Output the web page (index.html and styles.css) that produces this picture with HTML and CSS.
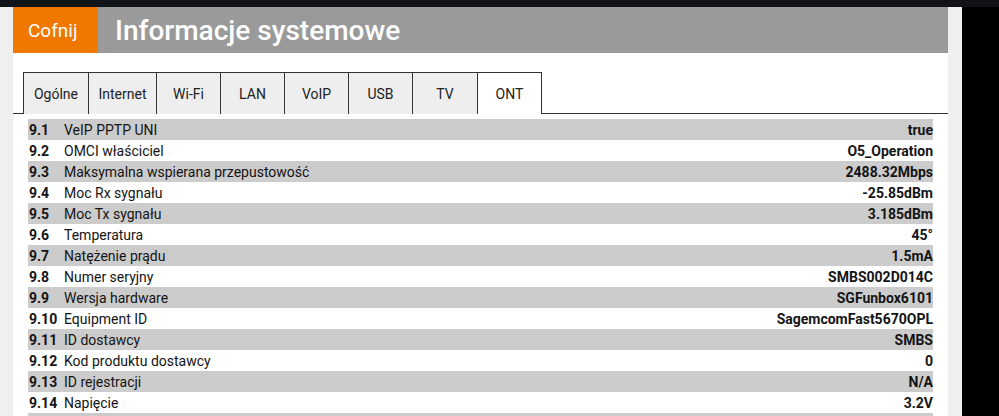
FILE: index.html
```html
<!DOCTYPE html>
<html lang="pl">
<head>
<meta charset="utf-8">
<title>Informacje systemowe</title>
<link rel="stylesheet" href="styles.css">
</head>
<body>
<div class="topbar"></div>
<div class="screen">
  <div class="frame">
    <div class="page">
      <header class="header">
        <div class="back">Cofnij</div>
        <h1 class="title">Informacje systemowe</h1>
      </header>
      <nav class="tabs">
        <div class="tab-edge"></div>
        <div class="tab w65">Ogólne</div>
        <div class="tab w68">Internet</div>
        <div class="tab w64">Wi-Fi</div>
        <div class="tab w64">LAN</div>
        <div class="tab w64">VoIP</div>
        <div class="tab w64">USB</div>
        <div class="tab w65">TV</div>
        <div class="tab w64 active">ONT</div>
        <div class="tab-fill"></div>
      </nav>
      <div class="rows">
        <div class="row"><span class="num">9.1</span><span class="label">VeIP PPTP UNI</span><span class="val">true</span></div>
        <div class="row"><span class="num">9.2</span><span class="label">OMCI właściciel</span><span class="val">O5_Operation</span></div>
        <div class="row"><span class="num">9.3</span><span class="label">Maksymalna wspierana przepustowość</span><span class="val">2488.32Mbps</span></div>
        <div class="row"><span class="num">9.4</span><span class="label">Moc Rx sygnału</span><span class="val">-25.85dBm</span></div>
        <div class="row"><span class="num">9.5</span><span class="label">Moc Tx sygnału</span><span class="val">3.185dBm</span></div>
        <div class="row"><span class="num">9.6</span><span class="label">Temperatura</span><span class="val">45°</span></div>
        <div class="row"><span class="num">9.7</span><span class="label">Natężenie prądu</span><span class="val">1.5mA</span></div>
        <div class="row"><span class="num">9.8</span><span class="label">Numer seryjny</span><span class="val">SMBS002D014C</span></div>
        <div class="row"><span class="num">9.9</span><span class="label">Wersja hardware</span><span class="val">SGFunbox6101</span></div>
        <div class="row"><span class="num">9.10</span><span class="label">Equipment ID</span><span class="val">SagemcomFast5670OPL</span></div>
        <div class="row"><span class="num">9.11</span><span class="label">ID dostawcy</span><span class="val">SMBS</span></div>
        <div class="row"><span class="num">9.12</span><span class="label">Kod produktu dostawcy</span><span class="val">0</span></div>
        <div class="row"><span class="num">9.13</span><span class="label">ID rejestracji</span><span class="val">N/A</span></div>
        <div class="row"><span class="num">9.14</span><span class="label">Napięcie</span><span class="val">3.2V</span></div>
        <div class="row"><span class="num"></span><span class="label"></span><span class="val"></span></div>
      </div>
    </div>
  </div>
</div>
</body>
</html>
```

FILE: styles.css
```css
html, body {
  margin: 0;
  padding: 0;
  height: 100%;
}
body {
  background: #000;
  font-family: Roboto, "Noto Sans", sans-serif;
  overflow: hidden;
}
.topbar {
  height: 7px;
  background: #101418;
}
.screen {
  display: flex;
}
.frame {
  width: 962px;
  box-sizing: border-box;
  padding: 0 14px 0 13px;
  background: #efeff0;
}
.page {
  background: #fff;
  min-height: 420px;
}
.header {
  display: flex;
  height: 46px;
  background: #9a9a9a;
}
.back {
  width: 85px;
  box-sizing: border-box;
  padding-left: 15px;
  background: #f07800;
  color: #fff;
  font-size: 19px;
  display: flex;
  align-items: center;
}
.title {
  margin: 0;
  padding-left: 17px;
  font-size: 28px;
  font-weight: 500;
  color: #fff;
  display: flex;
  align-items: center;
}
.tabs {
  display: flex;
  margin-top: 19px;
  height: 42px;
}
.tab-edge {
  width: 10px;
  border-bottom: 1px solid #333;
}
.tab-fill {
  flex: 1;
  border-bottom: 1px solid #333;
}
.tab {
  box-sizing: border-box;
  border-top: 1px solid #333;
  border-left: 1px solid #333;
  background: #eeeeee;
  color: #222;
  font-size: 14px;
  display: flex;
  align-items: center;
  justify-content: center;
}
.tab.active {
  background: #fff;
  border-right: 1px solid #333;
  width: 65px;
}
.w64 { width: 64px; }
.w65 { width: 65px; }
.w68 { width: 68px; }
.rows {
  margin: 5px 15px 0 15px;
}
.row {
  display: flex;
  align-items: center;
  height: 21px;
  font-size: 14px;
  color: #141414;
}
.row:nth-child(odd) {
  background: #cccccc;
}
.num {
  width: 35px;
  padding-left: 1px;
  font-weight: 700;
}
.label {
  flex: 1;
}
.val {
  font-weight: 700;
}
```
